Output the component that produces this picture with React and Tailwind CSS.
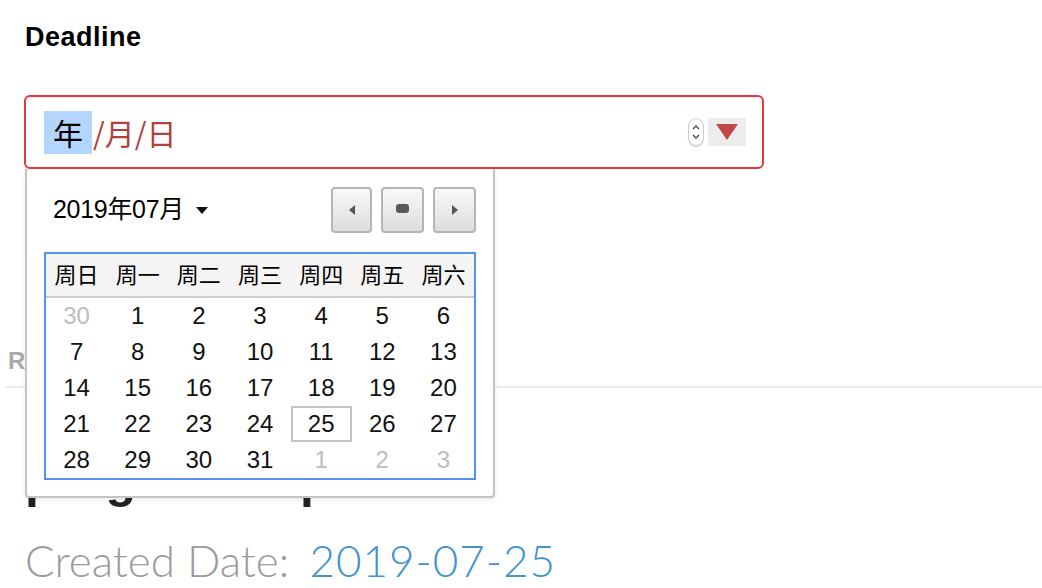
import React from 'react';

const weekDays = ['周日', '周一', '周二', '周三', '周四', '周五', '周六'];

// July 2019 grid, muted = days from other months
const weeks = [
  [[30, true], [1], [2], [3], [4], [5], [6]],
  [[7], [8], [9], [10], [11], [12], [13]],
  [[14], [15], [16], [17], [18], [19], [20]],
  [[21], [22], [23], [24], [25], [26], [27]],
  [[28], [29], [30], [31], [1, true], [2, true], [3, true]],
];

const NavButton = ({ children }) => (
  <button className="flex h-[46px] w-full items-center justify-center rounded-[4px] border-2 border-[#b5b5b5] bg-linear-to-b from-[#f8f8f8] to-[#dedede]">
    {children}
  </button>
);

const Spinner = () => (
  <div className="flex h-[28px] w-[16px] flex-col items-center justify-center rounded-full border border-[#cfcfcf] bg-white shadow-[0_1px_1px_rgba(0,0,0,0.15)]">
    <svg width="8" height="20" viewBox="0 0 8 20" fill="none" stroke="#444" strokeWidth="1.3">
      <path d="M1 7 L4 4 L7 7" />
      <path d="M1 13 L4 16 L7 13" />
    </svg>
  </div>
);

const DatePopup = () => (
  <div className="absolute left-[1px] top-full z-10 w-[470px] rounded-b-[4px] border-2 border-t-0 border-[#c4c4c4] bg-white px-[17px] pb-[16px] pt-[18px] shadow-[0_2px_4px_rgba(0,0,0,0.08)]">
    <div className="flex items-center justify-between">
      <div className="flex items-center pl-[9px] text-[25px] tracking-[-0.3px] text-black">
        <span>2019年07月</span>
        <svg className="ml-[12px]" width="12" height="7" viewBox="0 0 12 7">
          <path d="M0 0 H12 L6 7 Z" fill="#111" />
        </svg>
      </div>
      <div className="flex gap-[9px]">
        <div className="w-[41px]">
          <NavButton>
            <svg width="6" height="10" viewBox="0 0 6 10"><path d="M6 0 V10 L0 5 Z" fill="#555" /></svg>
          </NavButton>
        </div>
        <div className="w-[43px]">
          <NavButton>
            <div className="mb-[4px] h-[9px] w-[13px] rounded-[3px] bg-[#5a5a5a]" />
          </NavButton>
        </div>
        <div className="w-[43px]">
          <NavButton>
            <svg width="6" height="10" viewBox="0 0 6 10"><path d="M0 0 V10 L6 5 Z" fill="#555" /></svg>
          </NavButton>
        </div>
      </div>
    </div>

    <div className="mt-[19px] border-2 border-[#5592ee]">
      <div className="grid grid-cols-7 border-b-2 border-[#cdcdcd] bg-[#f4f4f4]">
        {weekDays.map((d) => (
          <div key={d} className="flex h-[42px] items-center justify-center text-[22px] text-black">
            {d}
          </div>
        ))}
      </div>
      <div className="grid grid-cols-7">
        {weeks.flat().map(([n, muted], i) => (
          <div
            key={i}
            className={
              'flex h-[36px] items-center justify-center text-[24px] ' +
              (muted ? 'text-[#bdbdbd] ' : 'text-[#111] ') +
              (n === 25 && !muted ? 'border-2 border-[#c3c3c3]' : '')
            }
          >
            {n}
          </div>
        ))}
      </div>
    </div>
  </div>
);

export default function App() {
  return (
    <div className="relative h-[588px] w-[1042px] overflow-hidden bg-white font-['Liberation_Sans','Noto_Sans_CJK_SC',sans-serif]">
      <div className="px-[24px] pt-[22px]">
        <div className="pl-[1px] text-[27px] font-bold leading-[30px] tracking-[0.5px] text-black">Deadline</div>

        <div className="relative mt-[43px] w-[740px]">
          <div className="flex h-[74px] items-center rounded-[6px] border-2 border-[#e2393c] pl-[18px] pr-[16px] shadow-[inset_0_1px_2px_rgba(0,0,0,0.06)]">
            <div className="flex items-center text-[30px] font-['Noto_Sans_CJK_SC',sans-serif] leading-none">
              <span className="flex h-[43px] items-center bg-[#b4d6fe] px-[9px] text-black">年</span>
              <span className="ml-[1px] text-[#b4403d]">/月/日</span>
            </div>
            <div className="ml-auto flex items-center gap-[4px]">
              <Spinner />
              <div className="flex h-[28px] w-[38px] items-center justify-center bg-[#ededed]">
                <svg width="22" height="16" viewBox="0 0 22 16"><path d="M0 0 H22 L11 16 Z" fill="#c0474a" /></svg>
              </div>
            </div>
          </div>
          <DatePopup />
        </div>
      </div>

      <div className="mt-[178px] pl-[8px] text-[24px] font-bold leading-[28px] text-[#aaaaaa]">Remarks</div>
      <div className="ml-[6px] mt-[11px] border-t-2 border-[#ebebeb]" />

      <div className="px-[25px]">
        <div className="mt-[63px] text-[50px] font-bold leading-[58px] text-[#222]">progress report</div>
        <div className="mt-[25px] font-['Lato',sans-serif] text-[44px] font-light leading-[52px]">
          <span className="text-[#9b9b9b]">Created Date:</span>
          <span className="ml-[20px] tracking-[1px] text-[#3f93d1]">2019-07-25</span>
        </div>
      </div>
    </div>
  );
}
